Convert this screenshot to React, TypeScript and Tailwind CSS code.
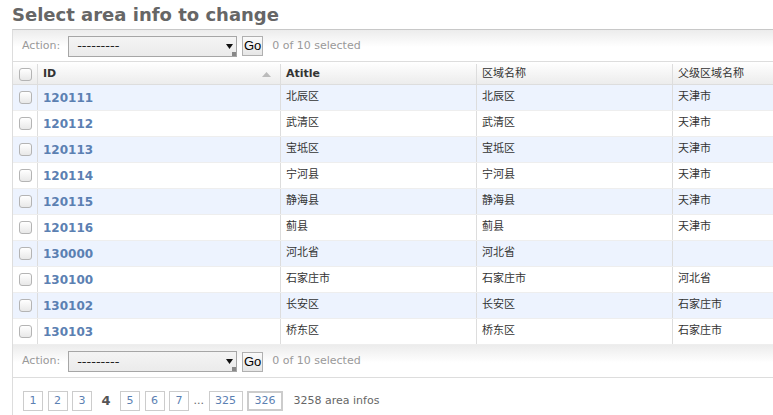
import React from "react";

const rows = [
  ["120111", "北辰区", "北辰区", "天津市"],
  ["120112", "武清区", "武清区", "天津市"],
  ["120113", "宝坻区", "宝坻区", "天津市"],
  ["120114", "宁河县", "宁河县", "天津市"],
  ["120115", "静海县", "静海县", "天津市"],
  ["120116", "蓟县", "蓟县", "天津市"],
  ["130000", "河北省", "河北省", ""],
  ["130100", "石家庄市", "石家庄市", "河北省"],
  ["130102", "长安区", "长安区", "石家庄市"],
  ["130103", "桥东区", "桥东区", "石家庄市"],
];

function Checkbox() {
  return (
    <div className="w-[13px] h-[13px] rounded-[3px] border border-[#b4b4b4] bg-[linear-gradient(to_bottom,#fff,#e8e8e8)]" />
  );
}

function ActionBar({ last }: { last?: boolean }) {
  return (
    <div
      className={
        "flex items-center border-b border-[#ddd] bg-[linear-gradient(to_bottom,#ececec,#fff_55%)] pl-[9px] pt-[1px] " +
        (last ? "h-[33px]" : "h-[32px]")
      }
    >
      <span className="text-[11px] text-[#999]">Action:</span>
      <div className="relative ml-[8px] flex items-center w-[169px] h-[21px] border border-[#a6a6a6] bg-[linear-gradient(to_bottom,#f4f4f4,#ebebeb)] pl-[8px] text-[13px] text-[#222]">
        ---------
        <svg className="absolute right-[3px] top-[7px]" width="7" height="5" viewBox="0 0 7 5">
          <path d="M0 0h7L3.5 5z" fill="#111" />
        </svg>
        <div className="absolute right-0 bottom-0 w-[4px] h-[4px] bg-[#888]" />
      </div>
      <div className="ml-[5px] flex items-center justify-center w-[21px] h-[20px] border border-[#b0b0b0] bg-[linear-gradient(to_bottom,#fafafa,#e6e6e6)] font-['Liberation_Sans',sans-serif] text-[13px] text-black">
        Go
      </div>
      <span className="ml-[9px] text-[11px] text-[#999]">0 of 10 selected</span>
    </div>
  );
}

function PageLink({ n, w, end }: { n: string; w: string; end?: boolean }) {
  return (
    <span
      className={
        "flex items-center justify-center h-[20px] bg-white text-[11px] text-[#5b80b2] " +
        w +
        (end ? " border-2 border-[#ccc]" : " border border-[#ccc]")
      }
    >
      {n}
    </span>
  );
}

export default function App() {
  return (
    <div className="w-[773px] h-[415px] overflow-hidden bg-white text-[#333] font-['DejaVu_Sans','Noto_Sans_CJK_SC',sans-serif]">
      <h1 className="mt-[4px] ml-[12px] text-[18px] leading-[22px] font-bold text-[#666]">
        Select area info to change
      </h1>

      <div className="ml-[12px] mt-[3px] w-[820px] border-l border-t border-l-[#ddd] border-t-[#c8c8c8]">
        <ActionBar />

        <div className="flex h-[23px] pt-[2px] border-b border-[#ddd] bg-[linear-gradient(to_bottom,#fff,#ececec)] text-[11px] font-bold text-[#333]">
          <div className="w-[24px] flex items-center justify-center">
            <Checkbox />
          </div>
          <div className="w-[243px] border-l border-[#ddd] flex items-center pl-[5px] pr-[9px]">
            <span className="flex-1">ID</span>
            <svg width="9" height="5" viewBox="0 0 9 5">
              <path d="M0 5L4.5 0L9 5z" fill="#bbb" />
            </svg>
          </div>
          <div className="w-[196px] border-l border-[#ddd] flex items-center pl-[5px]">Atitle</div>
          <div className="w-[196px] border-l border-[#ddd] flex items-center pl-[5px] font-normal">区域名称</div>
          <div className="w-[160px] border-l border-[#ddd] flex items-center pl-[5px] font-normal">父级区域名称</div>
        </div>

        {rows.map((r, i) => (
          <div
            key={r[0]}
            className={
              "flex h-[26px] border-b border-[#eee] text-[11px] " +
              (i % 2 === 0 ? "bg-[#edf3fe]" : "bg-white")
            }
          >
            <div className="w-[24px] flex items-center justify-center">
              <Checkbox />
            </div>
            <div className="w-[243px] border-l border-[#ddd] flex items-center pl-[5px] text-[12px] font-bold text-[#5b80b2]">
              {r[0]}
            </div>
            <div className="w-[196px] border-l border-[#ddd] flex items-center pl-[5px]">{r[1]}</div>
            <div className="w-[196px] border-l border-[#ddd] flex items-center pl-[5px]">{r[2]}</div>
            <div className="w-[160px] border-l border-[#ddd] flex items-center pl-[5px]">{r[3]}</div>
          </div>
        ))}

        <ActionBar last />

        <div className="flex items-center gap-[4.5px] pl-[10px] pt-[13px] pb-[10px]">
          <PageLink n="1" w="w-[20px]" />
          <PageLink n="2" w="w-[20px]" />
          <PageLink n="3" w="w-[20px]" />
          <span className="px-[5px] text-[13px] font-bold text-[#555]">4</span>
          <PageLink n="5" w="w-[20px]" />
          <PageLink n="6" w="w-[20px]" />
          <PageLink n="7" w="w-[20px]" />
          <span className="text-[11px] text-[#666]">...</span>
          <PageLink n="325" w="w-[34px]" />
          <PageLink n="326" w="w-[36px]" end />
          <span className="ml-[6px] text-[11px] text-[#666]">3258 area infos</span>
        </div>
      </div>
    </div>
  );
}
